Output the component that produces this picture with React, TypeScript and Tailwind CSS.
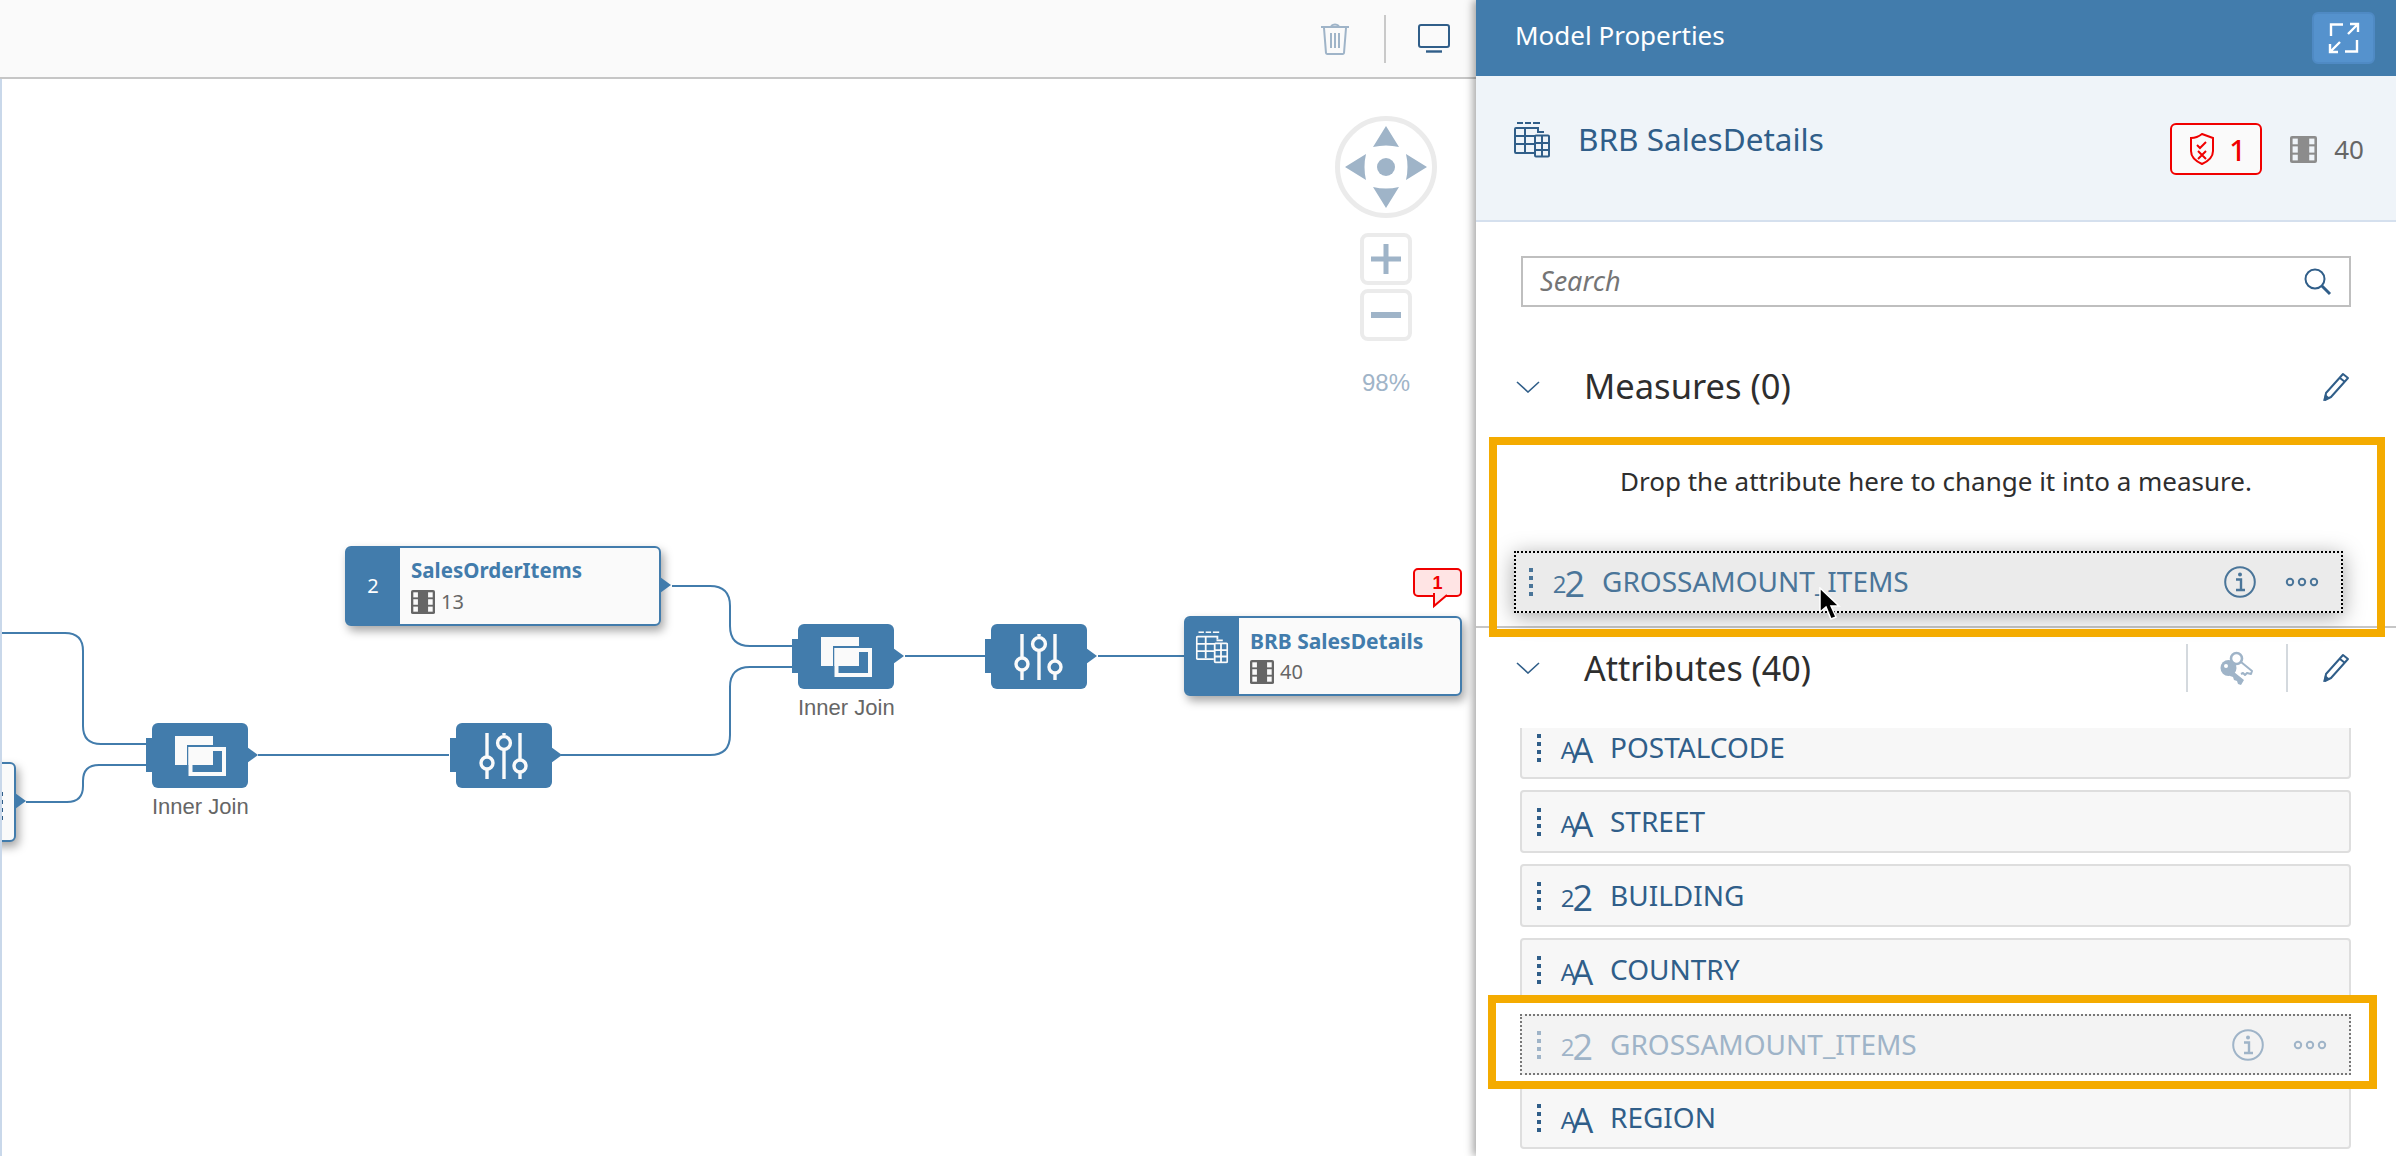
import React from "react";

const BLUE = "#427cac";

function TableIcon({ color }: { color: string }) {
  return (
    <svg width="36" height="36" viewBox="0 0 36 36" fill="none" stroke={color} strokeWidth="2">
      <path d="M3 1h6M11 1h6M19 1h7" />
      <path d="M20 31H2a1 1 0 0 1-1-1V7a1 1 0 0 1 1-1h22v3" />
      <path d="M1 14h20M1 22h20M11 6v24" />
      <path d="M23 10h7" />
      <rect x="21" y="13.5" width="14" height="21" rx="1" />
      <path d="M28 14v20M21 21h14M21 28h14" />
    </svg>
  );
}

function FilmIcon({ size, color, bg }: { size: number; color: string; bg: string }) {
  return (
    <svg width={size} height={size} viewBox="0 0 26 26">
      <rect x="0" y="0" width="26" height="26" rx="2" fill={color} />
      <rect x="2.5" y="2.5" width="5" height="5.5" fill={bg} />
      <rect x="2.5" y="10" width="5" height="6" fill={bg} />
      <rect x="2.5" y="18" width="5" height="5.5" fill={bg} />
      <rect x="18.5" y="2.5" width="5" height="5.5" fill={bg} />
      <rect x="18.5" y="10" width="5" height="6" fill={bg} />
      <rect x="18.5" y="18" width="5" height="5.5" fill={bg} />
    </svg>
  );
}

function Pencil() {
  return (
    <svg width="28" height="30" viewBox="0 0 28 30" fill="none" stroke="#305e89" strokeWidth="2">
      <path d="M21 2l5 4L9 25l-6 3 1-7z" strokeLinejoin="round" />
      <path d="M18 6l5 4" />
      <path d="M1 29l2-7 5 4z" fill="#305e89" stroke="none" />
    </svg>
  );
}

function Chevron() {
  return (
    <svg width="24" height="12" viewBox="0 0 24 12" fill="none" stroke="#305e89" strokeWidth="1.6">
      <path d="M1 1l11 10L23 1" />
    </svg>
  );
}

function Dots({ color }: { color: string }) {
  return (
    <div className="flex flex-col gap-[4px]">
      {[0, 1, 2, 3].map((i) => (
        <div key={i} className="w-[4px] h-[4px]" style={{ background: color }} />
      ))}
    </div>
  );
}

function TypeIcon({ kind, color }: { kind: "a" | "n"; color: string }) {
  const ch = kind === "a" ? "A" : "2";
  return (
    <div
      className="w-[38px] h-[30px] flex items-end justify-center font-['Open_Sans'] leading-[26px]"
      style={{ color }}
    >
      <span className="text-[24px] font-normal">{ch}</span>
      <span className={kind === "a" ? "text-[34px] font-normal -ml-[4px]" : "text-[36px] font-normal -ml-[2px]"}>{ch}</span>
    </div>
  );
}

function Info({ color }: { color: string }) {
  return (
    <svg width="32" height="32" viewBox="0 0 32 32" fill="none" stroke={color} strokeWidth="2">
      <circle cx="16" cy="16" r="14.8" />
      <path d="M12 13.500h5v10.500M12 24h9" strokeWidth="2.4" />
      <circle cx="16" cy="8.500" r="2" fill={color} stroke="none" />
    </svg>
  );
}

function More({ color }: { color: string }) {
  return (
    <svg width="34" height="10" viewBox="0 0 34 10" fill="none" stroke={color} strokeWidth="2">
      <circle cx="5" cy="5" r="3.2" />
      <circle cx="17" cy="5" r="3.2" />
      <circle cx="29" cy="5" r="3.2" />
    </svg>
  );
}

function Row({ kind, name }: { kind: "a" | "n"; name: string }) {
  return (
    <div className="h-[63px] flex items-center pl-[15px] bg-[#f7f7f7] border-2 border-[#dedede] rounded-[4px]">
      <Dots color="#305e89" />
      <div className="ml-[17px]">
        <TypeIcon kind={kind} color="#305e89" />
      </div>
      <span className="ml-[14px] -mt-[2px] text-[28px] leading-[40px] text-[#305e89]">{name}</span>
    </div>
  );
}

function JoinIcon() {
  return (
    <svg width="51" height="40" viewBox="0 0 51 40">
      <rect x="0" y="0" width="38" height="29" fill="#fafafa" />
      <rect x="12" y="9" width="39" height="31" fill={BLUE} />
      <rect x="13.500" y="11" width="37.500" height="29" fill="#fafafa" />
      <rect x="17.500" y="15" width="29.500" height="21" fill={BLUE} />
      <rect x="13.500" y="11" width="24.500" height="18" fill="#fafafa" />
      <rect x="38" y="9" width="13" height="2" fill={BLUE} />
    </svg>
  );
}

function FilterIcon() {
  return (
    <svg width="50" height="46" viewBox="0 0 50 46" fill="none" stroke="#fafafa" strokeWidth="3.4">
      <path d="M8 0v24M8 36v10M25 0v2M25 16v30M41 0v27M41 39v7" />
      <circle cx="8" cy="30" r="6" />
      <circle cx="25" cy="10" r="6.4" />
      <circle cx="41" cy="33" r="6" />
    </svg>
  );
}

function Op({ pos, kind, label }: { pos: string; kind: "join" | "filter"; label?: string }) {
  return (
    <div className={`absolute ${pos} w-[96px] h-[65px] bg-[#427cac] rounded-[6px] flex items-center justify-center`}>
      <div className="absolute -left-[6px] top-[15px] w-[6px] h-[34px] bg-[#427cac]" />
      <svg className="absolute -right-[11px] top-[21px]" width="12" height="22" viewBox="0 0 12 22">
        <path d="M0 3l11 8L0 19z" fill={BLUE} />
      </svg>
      {kind === "join" ? <JoinIcon /> : <FilterIcon />}
      {label && (
        <div className="absolute top-[69px] left-0 w-full text-center text-[22px] leading-[30px] text-[#666] font-['Liberation_Sans'] whitespace-nowrap">
          {label}
        </div>
      )}
    </div>
  );
}

function Entity({
  pos,
  left,
  title,
  count,
}: {
  pos: string;
  left: React.ReactNode;
  title: string;
  count: string;
}) {
  return (
    <div
      className={`absolute ${pos} h-[80px] flex rounded-[6px] border-2 border-[#427cac] bg-[#fafafa] shadow-[3px_5px_10px_rgba(0,0,0,0.35)]`}
    >
      <div className="w-[54px] -ml-[1px] bg-[#427cac] flex items-center justify-center text-white text-[20px] rounded-l-[4px]">
        {left}
      </div>
      <div className="pl-[11px] pt-[9px]">
        <div className="text-[20.500px] leading-[26px] font-bold text-[#427cac] whitespace-nowrap">{title}</div>
        <div className="flex items-center gap-[6px] mt-[7px] text-[20px] leading-[24px] text-[#666]">
          <FilmIcon size={24} color="#666" bg="#fafafa" />
          {count}
        </div>
      </div>
      <svg className="absolute -right-[13px] top-[26px]" width="12" height="22" viewBox="0 0 12 22">
        <path d="M0 3l11 8L0 19z" fill={BLUE} />
      </svg>
    </div>
  );
}

function Canvas() {
  return (
    <div className="relative flex-1 overflow-hidden bg-white">
      <svg className="absolute inset-0 w-full h-full" fill="none" stroke={BLUE} strokeWidth="2">
        <path d="M2 554H65Q83 554 83 572V647Q83 665 101 665H146" />
        <path d="M26 723H67Q83 723 83 707V702Q83 686 99 686H146" />
        <path d="M258 676H449" />
        <path d="M561 676H710Q730 676 730 656V608Q730 588 750 588H792" />
        <path d="M672 507H710Q730 507 730 527V547Q730 567 750 567H792" />
        <path d="M905 577H985" />
        <path d="M1098 577H1184" />
      </svg>

      <Entity pos="-left-[300px] top-[683px] w-[316px]" left="" title="" count="" />
      <div className="absolute -left-[1px] top-[713px]">
        <Dots color="#305e89" />
      </div>
      <Entity pos="left-[345px] top-[467px] w-[316px]" left="2" title="SalesOrderItems" count="13" />
      <div className="absolute left-[1184px] top-[537px]">
        <div className="relative w-[278px] h-[80px]">
          <div className="absolute left-0 top-0 w-[278px] h-[80px] flex rounded-[6px] border-2 border-[#427cac] bg-[#fafafa] shadow-[3px_5px_10px_rgba(0,0,0,0.35)]">
            <div className="w-[54px] -ml-[1px] bg-[#427cac] flex justify-center pt-[10px] rounded-l-[4px]">
              <div className="scale-90">
                <TableIcon color="#fafafa" />
              </div>
            </div>
            <div className="pl-[11px] pt-[10px]">
              <div className="text-[21px] leading-[26px] font-bold text-[#427cac] whitespace-nowrap">BRB SalesDetails</div>
              <div className="flex items-center gap-[6px] mt-[6px] text-[20px] leading-[24px] text-[#666]">
                <FilmIcon size={24} color="#666" bg="#fafafa" />
                40
              </div>
            </div>
          </div>
          <div className="absolute left-[229px] -top-[48px] w-[49px] h-[29px] bg-[#ffe4e4] border-2 border-[#f00000] rounded-[5px] flex items-center justify-center text-[#f00000] text-[18px] leading-none font-bold font-['Liberation_Sans']">
            1
            <svg className="absolute left-[18px] top-[23px]" width="20" height="16" viewBox="0 0 20 16">
              <path d="M1 0L1 13L14 2" fill="#ffe4e4" stroke="#f00000" strokeWidth="2" />
            </svg>
          </div>
        </div>
      </div>

      <Op pos="left-[152px] top-[644px]" kind="join" label="Inner Join" />
      <Op pos="left-[456px] top-[644px]" kind="filter" />
      <Op pos="left-[798px] top-[545px]" kind="join" label="Inner Join" />
      <Op pos="left-[991px] top-[545px]" kind="filter" />

      <div className="absolute left-[1335px] top-[37px] w-[102px] flex flex-col items-center">
        <svg width="102" height="102" viewBox="-51 -51 102 102">
          <circle r="48.5" fill="#fff" stroke="#ebebeb" strokeWidth="5" />
          <g fill="#9fb4c8">
            <circle r="9" />
            <path d="M0-41L13-20Q0-23-13-20Z" />
            <path d="M0 41L13 20Q0 23-13 20Z" />
            <path d="M-41 0L-20 13Q-23 0-20-13Z" />
            <path d="M41 0L20 13Q23 0 20-13Z" />
          </g>
        </svg>
        <div className="mt-[15px] w-[52px] h-[52px] border-[4px] border-[#ebebeb] rounded-[8px] flex items-center justify-center">
          <svg width="30" height="30" viewBox="0 0 30 30" fill="#9fb4c8">
            <rect x="0" y="12.5" width="30" height="5" />
            <rect x="12.5" y="0" width="5" height="30" />
          </svg>
        </div>
        <div className="mt-[4px] w-[52px] h-[52px] border-[4px] border-[#ebebeb] rounded-[8px] flex items-center justify-center">
          <svg width="30" height="6" viewBox="0 0 30 6" fill="#9fb4c8">
            <rect x="0" y="0" width="30" height="6" />
          </svg>
        </div>
        <div className="mt-[27px] text-[24px] leading-[30px] text-[#9fb4c8] font-['Liberation_Sans']">98%</div>
      </div>
      <div className="absolute left-0 top-0 bottom-0 w-[2px] bg-[#c9d8ea]" />
    </div>
  );
}

function Toolbar() {
  return (
    <div className="h-[79px] bg-[#fafafa] border-b-2 border-[#c6c6c6] flex items-center justify-end pr-[26px] shrink-0">
      <svg width="30" height="32" viewBox="0 0 30 32" fill="none" stroke="#9fb4c8" strokeWidth="2">
        <path d="M1 4h28M11 3q4-3 8 0" />
        <path d="M4 5l2 25a1.5 1.5 0 0 0 1.5 1h15a1.5 1.5 0 0 0 1.5-1l2-25" />
        <path d="M11 10v15M15 10v15M19 10v15" />
      </svg>
      <div className="w-[2px] h-[48px] bg-[#c9c9c9] ml-[34px] mr-[32px]" />
      <svg width="32" height="29" viewBox="0 0 32 29" fill="none" stroke="#305e89">
        <rect x="1" y="1" width="30" height="22" rx="2" strokeWidth="2" />
        <path d="M8 27.5h16" strokeWidth="2.4" />
      </svg>
    </div>
  );
}

function Panel() {
  return (
    <div className="relative z-10 w-[920px] h-full shrink-0 flex flex-col bg-white shadow-[-3px_0_8px_rgba(0,0,0,0.35)] font-['Noto_Sans']">
      <div className="h-[76px] shrink-0 bg-[#427cac] flex items-center justify-between pl-[39px] pr-[21px]">
        <span className="text-white text-[26px] -mt-[6px]">Model Properties</span>
        <div className="w-[63px] h-[52px] rounded-[6px] bg-[#5592cd] border-2 border-[#4f8ac4] flex items-center justify-center">
          <svg width="32" height="32" viewBox="0 0 32 32" fill="none" stroke="#fff" strokeWidth="2.4">
            <path d="M3 14V2.500H15M20 12L30 2M22 2h8v8M29 18v11.500H17M12 20L2 30M2 22v8h8" />
          </svg>
        </div>
      </div>

      <div className="h-[146px] shrink-0 bg-[#eff4f9] border-b-2 border-[#d5e0ee] flex items-start pl-[38px] pr-[32px] relative">
        <div className="mt-[46px]">
          <TableIcon color="#305e89" />
        </div>
        <span className="ml-[28px] mt-[41px] text-[31.500px] leading-[44px] text-[#305e89]">BRB SalesDetails</span>
        <div className="ml-auto mt-[47px] flex items-center">
          <div className="-ml-[2px] w-[92px] h-[52px] border-2 border-[#f00000] rounded-[6px] bg-[#fafafa] flex items-center pl-[18px] text-[#f00000] text-[29px] font-medium gap-[15px]">
            <svg width="24" height="32" viewBox="0 0 24 32" fill="none" stroke="#f00000" strokeWidth="2">
              <path d="M12 1l11 4v13q0 8-11 13Q1 26 1 18V5q6 0 11-4z" />
              <path d="M7 12l3 3 6-6M8 18l8 8M16 18l-8 8" />
            </svg>
            <span className="leading-none">1</span>
          </div>
          <div className="ml-[28px]">
            <FilmIcon size={27} color="#8c8c8c" bg="#eff4f9" />
          </div>
          <span className="ml-[17px] text-[26px] text-[#666]">40</span>
        </div>
      </div>

      <div className="mt-[34px] ml-[45px] mr-[45px] h-[51px] shrink-0 border-2 border-[#bfbfbf] flex items-center justify-between pl-[17px] pr-[17px]">
        <span className="italic text-[27px] text-[#757575]">Search</span>
        <svg width="28" height="28" viewBox="0 0 28 28" fill="none" stroke="#305e89" strokeWidth="2">
          <circle cx="11" cy="11" r="9.500" />
          <path d="M18 18l8 8" strokeWidth="3" />
        </svg>
      </div>

      <div className="mt-[50px] h-[60px] shrink-0 flex items-center pl-[40px] pr-[46px]">
        <Chevron />
        <span className="ml-[44px] -mt-[2px] text-[34.500px] text-[#2e2e2e]">Measures (0)</span>
        <div className="ml-auto">
          <Pencil />
        </div>
      </div>

      <div className="relative h-[211px] shrink-0 border-b-2 border-[#c6c6c6]">
        <div className="mt-[49px] text-center text-[26px] leading-[30px] text-[#2e2e2e]">
          Drop the attribute here to change it into a measure.
        </div>
        <div className="relative mt-[55px] ml-[38px] w-[829px] h-[62px] bg-[#ebebeb] border-2 border-dotted border-black shadow-[0_4px_22px_rgba(0,0,0,0.35)] flex items-center pl-[13px]">
          <Dots color="#4a7599" />
          <div className="ml-[17px]">
            <TypeIcon kind="n" color="#4a7599" />
          </div>
          <span className="ml-[14px] -mt-[2px] text-[28px] leading-[40px] text-[#4a7599]">GROSSAMOUNT_ITEMS</span>
          <div className="ml-auto flex items-center gap-[29px] pr-[22px]">
            <Info color="#4a7599" />
            <More color="#4a7599" />
          </div>
          <svg className="absolute left-[302px] top-[34px]" width="24" height="34" viewBox="0 0 24 34">
            <path d="M2 1v24l6-5 5 12 5-2-5-11h8z" fill="#000" stroke="#fff" strokeWidth="1.500" />
          </svg>
        </div>
        <div className="absolute left-[13px] top-[20px] w-[896px] h-[200px] border-[8px] border-[#f4ab00]" />
      </div>

      <div className="mt-[16px] h-[48px] shrink-0 flex items-center pl-[40px] pr-[46px]">
        <Chevron />
        <span className="ml-[44px] text-[34px] text-[#2e2e2e]">Attributes (40)</span>
        <div className="ml-auto flex items-center h-full">
          <div className="w-[2px] h-[48px] bg-[#d4d9de]" />
          <svg className="mx-[32px]" width="34" height="36" viewBox="0 0 34 36" fill="none">
            <circle cx="16.500" cy="8.500" r="5.500" stroke="#9fb4c8" strokeWidth="2.600" />
            <path d="M21 12l11 9-1 3-4-1-2 2-2-2-2 1" stroke="#9fb4c8" strokeWidth="2" strokeLinejoin="round" />
            <circle cx="8.500" cy="18" r="8" fill="#9fb4c8" />
            <path d="M9 18l15 12-3 5-3-1-1-3-3-1-1-3-3-1z" fill="#9fb4c8" />
            <circle cx="6" cy="16" r="2" fill="#fff" />
          </svg>
          <div className="w-[2px] h-[48px] bg-[#d4d9de]" />
          <div className="ml-[34px]">
            <Pencil />
          </div>
        </div>
      </div>

      <div className="mt-[36px] flex-1 overflow-hidden">
        <div className="-mt-[12px] pl-[44px] pr-[45px] flex flex-col gap-[11px]">
          <Row kind="a" name="POSTALCODE" />
          <Row kind="a" name="STREET" />
          <Row kind="n" name="BUILDING" />
          <Row kind="a" name="COUNTRY" />
          <div className="relative h-[63px]">
            <div className="absolute -left-[32px] -top-[17px] w-[889px] h-[94px] bg-white border-[8px] border-[#f4ab00] z-10" />
            <div className="absolute left-0 right-0 top-[2px] bottom-0 z-20 bg-[#f3f3f3] border-2 border-dotted border-[#777] flex items-center pl-[15px]">
              <Dots color="#9fb4c8" />
              <div className="ml-[17px]">
                <TypeIcon kind="n" color="#9fb4c8" />
              </div>
              <span className="ml-[14px] -mt-[2px] text-[28px] leading-[40px] text-[#9fb4c8]">GROSSAMOUNT_ITEMS</span>
              <div className="ml-auto flex items-center gap-[29px] pr-[22px]">
                <Info color="#9fb4c8" />
                <More color="#9fb4c8" />
              </div>
            </div>
          </div>
          <Row kind="a" name="REGION" />
        </div>
      </div>
    </div>
  );
}

export default function App() {
  return (
    <div className="w-[2396px] h-[1156px] flex overflow-hidden bg-white font-['Noto_Sans']">
      <div className="flex-1 h-full flex flex-col min-w-0">
        <Toolbar />
        <Canvas />
      </div>
      <Panel />
    </div>
  );
}
